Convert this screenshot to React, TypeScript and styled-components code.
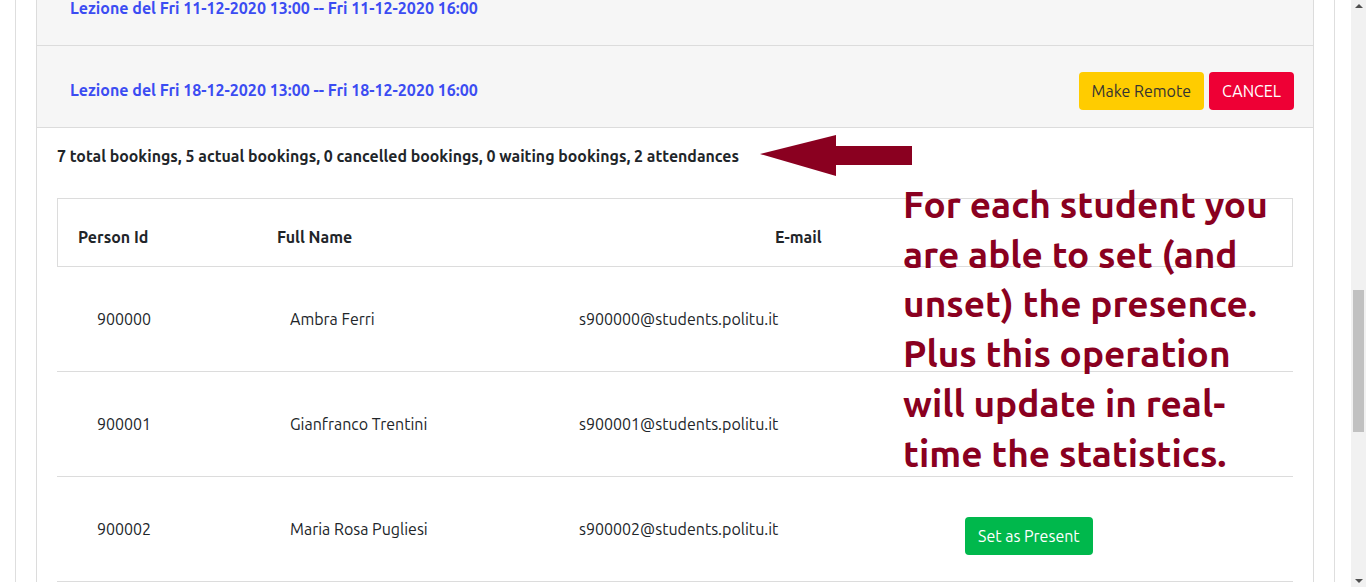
import React from "react";
import styled, { createGlobalStyle } from "styled-components";

const Global = createGlobalStyle`
  html, body { margin: 0; padding: 0; background: #fff; }
  body { font-family: "Ubuntu", "Open Sans", "Noto Sans", sans-serif; color: #212529; overflow: hidden; }
  * { box-sizing: border-box; }
`;

const Page = styled.div`
  display: flex;
  height: 587px;
  overflow: hidden;
`;

const Main = styled.div`
  flex: 1;
  padding: 0 16px 0 15px;
  overflow: hidden;
`;

const Container = styled.div`
  border-left: 1px solid #dedede;
  border-right: 1px solid #dedede;
  padding: 0 20px;
  min-height: 100%;
`;

const Card = styled.div`
  border-left: 1px solid #dcdcdc;
  border-right: 1px solid #dcdcdc;
  margin-top: -36px;
`;

const LessonHeader = styled.div`
  display: flex;
  align-items: center;
  justify-content: space-between;
  height: 82px;
  padding: 7px 19px 0 33px;
  background: #f6f6f6;
  border-bottom: 1px solid #dcdcdc;
`;

const LessonLink = styled.span`
  color: #3b4cf2;
  font-weight: 600;
  font-size: 16px;
`;

const Actions = styled.div`
  display: flex;
  gap: 5px;
  margin-top: 2px;
`;

const Button = styled.button<{ $variant: "warning" | "danger" | "success" }>`
  font-family: inherit;
  font-size: 16px;
  border: none;
  border-radius: 4px;
  height: 38px;
  padding: 0 13px;
  cursor: pointer;
  background: ${(p) =>
    p.$variant === "warning" ? "#ffcc00" : p.$variant === "danger" ? "#ee0035" : "#00b84c"};
  color: ${(p) => (p.$variant === "warning" ? "#333" : "#fff")};
`;

const Body = styled.div`
  padding: 0 20px;
`;

const StatsRow = styled.div`
  display: flex;
  align-items: center;
  gap: 21px;
  height: 56px;
  margin-bottom: 14px;
`;

const Stats = styled.div`
  font-size: 15.9px;
  font-weight: 600;
  color: #212529;
`;

const TableWrap = styled.div`
  position: relative;
`;

const HeadRow = styled.div`
  display: grid;
  grid-template-columns: 199px 498px 1fr;
  align-items: center;
  height: 69px;
  padding-top: 8px;
  border: 1px solid #dcdcdc;
`;

const HeadCell = styled.div`
  padding-left: 20px;
  font-weight: 600;
  font-size: 16px;
`;

const Row = styled.div`
  display: grid;
  grid-template-columns: 193px 289px 386px 1fr;
  align-items: center;
  height: 105px;
  border-bottom: 1px solid #dcdcdc;
`;

const Cell = styled.div`
  padding-left: 40px;
  font-size: 16px;
`;

const ButtonCell = styled.div`
  padding-left: 40px;
  margin-top: 14px;
`;

const Annotation = styled.div`
  position: absolute;
  left: 846px;
  top: -18px;
  width: 378px;
  color: #8a0020;
  font-weight: 700;
  font-size: 37px;
  line-height: 49.7px;
`;

const Scrollbar = styled.div`
  width: 15px;
  background: #f1f1f1;
  display: flex;
  flex-direction: column;
  align-items: center;
  justify-content: space-between;
  padding: 4px 0;
`;

const Arrow = styled.div<{ $up?: boolean }>`
  width: 0;
  height: 0;
  border-left: 4px solid transparent;
  border-right: 4px solid transparent;
  ${(p) => (p.$up ? "border-bottom: 4px solid #505050;" : "border-top: 4px solid #505050;")}
`;

const Track = styled.div`
  flex: 1;
  width: 100%;
  display: flex;
  flex-direction: column;
  align-items: center;
  padding-top: 282px;
`;

const Thumb = styled.div`
  width: 11px;
  height: 142px;
  background: #c1c1c1;
`;

const students = [
  { id: "900000", name: "Ambra Ferri", email: "s900000@students.politu.it", present: true },
  { id: "900001", name: "Gianfranco Trentini", email: "s900001@students.politu.it", present: true },
  { id: "900002", name: "Maria Rosa Pugliesi", email: "s900002@students.politu.it", present: false },
];

export default function App() {
  return (
    <>
      <Global />
      <Page>
        <Main>
          <Container>
            <Card>
              <LessonHeader>
                <LessonLink>Lezione del Fri 11-12-2020 13:00 -- Fri 11-12-2020 16:00</LessonLink>
              </LessonHeader>
              <LessonHeader>
                <LessonLink>Lezione del Fri 18-12-2020 13:00 -- Fri 18-12-2020 16:00</LessonLink>
                <Actions>
                  <Button $variant="warning">Make Remote</Button>
                  <Button $variant="danger">CANCEL</Button>
                </Actions>
              </LessonHeader>
              <Body>
                <StatsRow>
                  <Stats>
                    7 total bookings, 5 actual bookings, 0 cancelled bookings, 0 waiting bookings, 2 attendances
                  </Stats>
                  <svg width="153" height="42" viewBox="0 0 153 42">
                    <polygon points="0,19 76,0 76,11 152,11 152,30 76,30 76,41" fill="#8a0020" />
                  </svg>
                </StatsRow>
                <TableWrap>
                  <HeadRow>
                    <HeadCell>Person Id</HeadCell>
                    <HeadCell>Full Name</HeadCell>
                    <HeadCell>E-mail</HeadCell>
                  </HeadRow>
                  {students.map((s) => (
                    <Row key={s.id}>
                      <Cell>{s.id}</Cell>
                      <Cell>{s.name}</Cell>
                      <Cell>{s.email}</Cell>
                      <ButtonCell>
                        {!s.present && <Button $variant="success">Set as Present</Button>}
                      </ButtonCell>
                    </Row>
                  ))}
                  <Annotation>
                    For each student you are able to set (and unset) the presence. Plus this operation will
                    update in real-time the statistics.
                  </Annotation>
                </TableWrap>
              </Body>
            </Card>
          </Container>
        </Main>
        <Scrollbar>
          <Arrow $up />
          <Track>
            <Thumb />
          </Track>
          <Arrow />
        </Scrollbar>
      </Page>
    </>
  );
}
